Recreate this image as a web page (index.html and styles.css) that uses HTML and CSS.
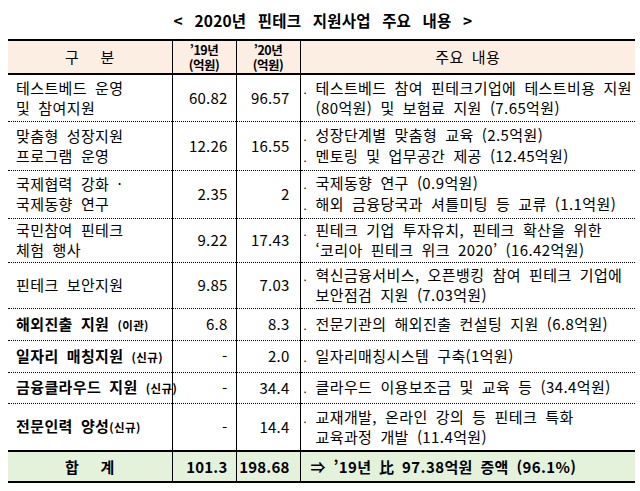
FILE: index.html
```html
<!DOCTYPE html>
<html lang="ko">
<head>
<meta charset="utf-8">
<title>2020년 핀테크 지원사업 주요 내용</title>
<link rel="stylesheet" href="styles.css">
</head>
<body>
<div class="page">
  <h1 class="title">&lt; 2020년 핀테크 지원사업 주요 내용 &gt;</h1>
  <table class="tbl">
    <colgroup>
      <col class="c1"><col class="c2"><col class="c3"><col class="c4">
    </colgroup>
    <thead>
      <tr class="head">
        <th class="h-name"><span class="spread">구 분</span></th>
        <th class="h-year"><span class="yl">’19년</span><span class="yl">(억원)</span></th>
        <th class="h-year"><span class="yl">’20년</span><span class="yl">(억원)</span></th>
        <th class="h-main">주요 내용</th>
      </tr>
    </thead>
    <tbody>
      <tr class="r1">
        <td class="name">테스트베드 운영<br>및 참여지원</td>
        <td class="n19">60.82</td>
        <td class="n20">96.57</td>
        <td class="desc"><div class="item"><span class="dot">.</span><span>테스트베드 참여 핀테크기업에 테스트비용 지원<br>(80억원) 및 보험료 지원 (7.65억원)</span></div></td>
      </tr>
      <tr class="r2">
        <td class="name">맞춤형 성장지원<br>프로그램 운영</td>
        <td class="n19">12.26</td>
        <td class="n20">16.55</td>
        <td class="desc"><div class="item"><span class="dot">.</span><span>성장단계별 맞춤형 교육 (2.5억원)</span></div><div class="item"><span class="dot">.</span><span>멘토링 및 업무공간 제공 (12.45억원)</span></div></td>
      </tr>
      <tr class="r3">
        <td class="name">국제협력 강화 ·<br>국제동향 연구</td>
        <td class="n19">2.35</td>
        <td class="n20">2</td>
        <td class="desc"><div class="item"><span class="dot">.</span><span>국제동향 연구 (0.9억원)</span></div><div class="item"><span class="dot">.</span><span>해외 금융당국과 셔틀미팅 등 교류 (1.1억원)</span></div></td>
      </tr>
      <tr class="r4">
        <td class="name">국민참여 핀테크<br>체험 행사</td>
        <td class="n19">9.22</td>
        <td class="n20">17.43</td>
        <td class="desc"><div class="item"><span class="dot">.</span><span>핀테크 기업 투자유치, 핀테크 확산을 위한<br>‘코리아 핀테크 위크 2020’ (16.42억원)</span></div></td>
      </tr>
      <tr class="r5">
        <td class="name">핀테크 보안지원</td>
        <td class="n19">9.85</td>
        <td class="n20">7.03</td>
        <td class="desc"><div class="item"><span class="dot">.</span><span>혁신금융서비스, 오픈뱅킹 참여 핀테크 기업에<br>보안점검 지원 (7.03억원)</span></div></td>
      </tr>
      <tr class="r6">
        <td class="name b">해외진출 지원 <small>(이관)</small></td>
        <td class="n19">6.8</td>
        <td class="n20">8.3</td>
        <td class="desc"><div class="item"><span class="dot">.</span><span>전문기관의 해외진출 컨설팅 지원 (6.8억원)</span></div></td>
      </tr>
      <tr class="r7">
        <td class="name b">일자리 매칭지원 <small>(신규)</small></td>
        <td class="n19">-</td>
        <td class="n20">2.0</td>
        <td class="desc"><div class="item"><span class="dot">.</span><span>일자리매칭시스템 구축(1억원)</span></div></td>
      </tr>
      <tr class="r8">
        <td class="name b">금융클라우드 지원 <small>(신규)</small></td>
        <td class="n19">-</td>
        <td class="n20">34.4</td>
        <td class="desc"><div class="item"><span class="dot">.</span><span>클라우드 이용보조금 및 교육 등 (34.4억원)</span></div></td>
      </tr>
      <tr class="r9">
        <td class="name b">전문인력 양성<small>(신규)</small></td>
        <td class="n19">-</td>
        <td class="n20">14.4</td>
        <td class="desc"><div class="item"><span class="dot">.</span><span>교재개발, 온라인 강의 등 핀테크 특화<br>교육과정 개발 (11.4억원)</span></div></td>
      </tr>
    </tbody>
    <tfoot>
      <tr class="total">
        <td class="h-name"><span class="spread">합 계</span></td>
        <td class="n19">101.3</td>
        <td class="n20">198.68</td>
        <td class="sum">⇒ ’19년 比 97.38억원 증액 (96.1%)</td>
      </tr>
    </tfoot>
  </table>
</div>
</body>
</html>
```
FILE: styles.css
```css
html, body {
  margin: 0;
  padding: 0;
  background: #ffffff;
}
body {
  font-family: "Noto Sans CJK KR", "Noto Sans", sans-serif;
  color: #000000;
}
.page {
  width: 640px;
  height: 491px;
  overflow: hidden;
}
.title {
  margin: 0;
  height: 39px;
  line-height: 40px;
  font-size: 15.5px;
  font-weight: 700;
  text-align: center;
  word-spacing: 7px;
  letter-spacing: 0.2px;
  padding-left: 6px;
}
.tbl {
  margin-left: 8px;
  border-collapse: collapse;
  table-layout: fixed;
  width: 627px;
  font-size: 15px;
  letter-spacing: 0.4px;
  word-spacing: 3.5px;
}
.c1 { width: 164px; }
.c2 { width: 64px; }
.c3 { width: 64px; }
.c4 { width: 335px; }
.tbl th, .tbl td {
  padding: 0;
  vertical-align: middle;
  border-left: 1px solid #000;
  line-height: 20px;
}
.tbl th:first-child, .tbl td:first-child {
  border-left: none;
}
.head th {
  background: #fdeee4;
  border-top: 2px solid #000;
  border-bottom: 2px solid #000;
  height: 32px;
  font-weight: 400;
}
.h-name {
  text-align: center;
  font-size: 15px;
}
.spread {
  letter-spacing: 7px;
  padding-left: 7px;
}
.head .h-year {
  font-weight: 700;
  font-size: 12.5px;
  letter-spacing: -0.5px;
  word-spacing: 0;
  text-align: center;
}
.yl {
  display: block;
  height: 15px;
  line-height: 15px;
}
.h-main {
  text-align: center;
  font-size: 15px;
}
tbody td {
  border-bottom: 1px dotted #000;
}
tbody tr:last-child td {
  border-bottom: none;
}
.r1 { height: 47px; }
.r2 { height: 49px; }
.r3 { height: 48px; }
.r4 { height: 44px; }
.r5 { height: 46px; }
.r6 { height: 32px; }
.r7 { height: 32px; }
.r8 { height: 31px; }
.r9 { height: 48px; }
.name {
  padding-left: 8px !important;
  white-space: nowrap;
}
.name.b {
  font-weight: 700;
}
.name small {
  font-size: 11.5px;
  word-spacing: 0;
}
.n19, .n20 {
  text-align: right;
  white-space: nowrap;
  letter-spacing: 0.2px;
}
.n19 { padding-right: 8px !important; }
.n20 { padding-right: 10px !important; }
.desc {
  padding-left: 3px !important;
  white-space: nowrap;
}
.item {
  display: grid;
  grid-template-columns: 12px 1fr;
  align-items: baseline;
}
.dot {
  font-size: 11px;
  line-height: 20px;
}
.total td {
  background: #e4f2dc;
  border-top: 2px solid #000;
  border-bottom: 2px solid #000;
  height: 29px;
  font-weight: 700;
}
.total .h-name {
  font-size: 15px;
}
.sum {
  padding-left: 10px !important;
  white-space: nowrap;
  word-spacing: 3px;
}
```
